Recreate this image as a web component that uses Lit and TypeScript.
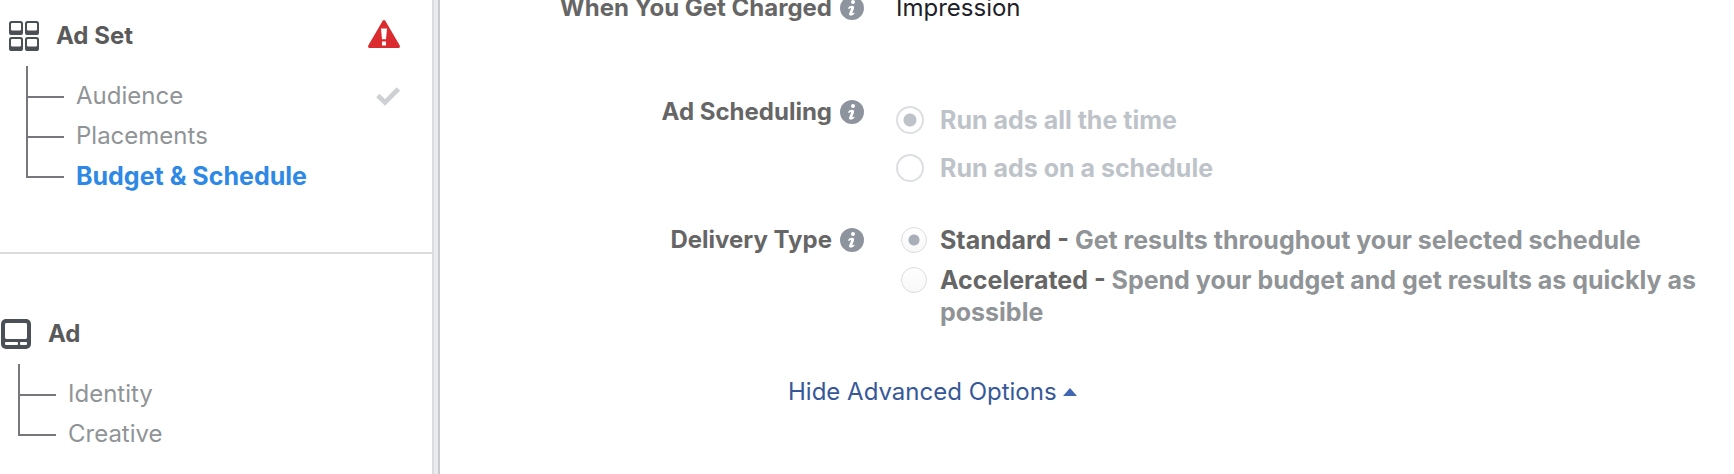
import { LitElement, html, css, svg } from "lit";
import { customElement, property } from "lit/decorators.js";

@customElement("info-badge")
class InfoBadge extends LitElement {
  @property() label = "";

  static styles = css`
    :host {
      display: block;
      flex: none;
      height: 24px;
    }
    .button {
      display: block;
      width: 24px;
      height: 24px;
      margin: 0;
      padding: 0;
      border: 0;
      background: none;
    }
    .glyph {
      display: block;
    }
  `;

  render() {
    return html`<button class="button" type="button" aria-label="About ${this.label}">
      <svg class="glyph" width="24" height="24" viewBox="0 0 24 24" aria-hidden="true">
        <circle cx="12" cy="12" r="12" fill="#8d949e" />
        <circle cx="13" cy="6" r="2" fill="#fff" />
        <path
          d="M8 12.2 C9 10.6 10.2 9.8 12 9.8 C13.8 9.8 14.6 10.9 14 12.4 L12.4 16.4 C12.2 17.2 12.6 17.6 13.2 17.2 L14.2 16.5 L14.7 17.2 C13.6 18.8 12.2 19.6 10.8 19.6 C9.2 19.6 8.7 18.5 9.3 17 L10.9 13 C11.1 12.3 10.7 11.9 10.1 12.2 L8.8 13 Z"
          fill="#fff"
        />
      </svg>
    </button>`;
  }
}

interface Step {
  text: string;
  active?: boolean;
  done?: boolean;
}

const adSetSteps: Step[] = [
  { text: "Audience", done: true },
  { text: "Placements" },
  { text: "Budget & Schedule", active: true },
];

const adSteps: Step[] = [{ text: "Identity" }, { text: "Creative" }];

const tile = (x: number, y: number) => svg`
  <rect x=${x} y=${y} width="14" height="14" rx="2.6" fill="#4b4f56" />
  <rect x=${x + 2} y=${y + 2} width="10" height="7.4" rx="1" fill="#fff" />`;

@customElement("step-nav")
class StepNav extends LitElement {
  static styles = css`
    :host {
      display: block;
      box-sizing: border-box;
      flex: none;
      width: 440px;
      border-right: 2px solid #cacaca;
      background: #e9ebee;
      padding-right: 4px;
    }
    .nav {
      box-sizing: border-box;
      height: 100%;
      border-right: 2px solid #dcdcde;
      background: #fff;
    }
    .section {
      padding: 21px 32px 55px 9px;
    }
    .section + .section {
      border-top: 2px solid #dcdcdc;
      padding: 65px 32px 0 1px;
    }
    .header {
      display: flex;
      align-items: center;
      gap: 17px;
      height: 30px;
    }
    .title {
      flex: 1;
      margin: 0;
      font-size: 24px;
      font-weight: 700;
      line-height: 30px;
      color: #5a5a5a;
    }
    .steps {
      list-style: none;
      margin: 15px 0 0 17px;
      padding: 0;
    }
    .step {
      box-sizing: border-box;
      display: flex;
      align-items: center;
      justify-content: space-between;
      height: 40px;
      padding: 0 0 2px 50px;
      background:
        linear-gradient(#77777d, #77777d) 0 calc(100% - 19px) / 38px 2px no-repeat,
        linear-gradient(#77777d, #77777d) 0 0 / 2px 100% no-repeat;
    }
    .step:first-child {
      height: 51px;
      padding-top: 11px;
    }
    .step:last-child {
      background-size:
        38px 2px,
        2px calc(100% - 19px);
    }
    .link {
      font-size: 24px;
      line-height: 32px;
      color: #909497;
      text-decoration: none;
    }
    .link.active {
      font-size: 25px;
      font-weight: 700;
      color: #2e88e6;
    }
    .icon {
      display: block;
      flex: none;
    }
  `;

  private steps(steps: Step[]) {
    return html`<ul class="steps">
      ${steps.map(
        (s) => html`<li class="step">
          <a class="link ${s.active ? "active" : ""}" href="#">${s.text}</a>
          ${s.done
            ? html`<svg class="icon" width="24" height="20" viewBox="0 0 24 20" role="img" aria-label="Complete">
                <path d="M1.8 9.6 L9 16.4 L22.4 3" fill="none" stroke="#ced0d4" stroke-width="4.8" />
              </svg>`
            : null}
        </li>`
      )}
    </ul>`;
  }

  render() {
    return html`<nav class="nav">
      <section class="section">
        <div class="header">
          <svg class="icon" width="30" height="30" viewBox="0 0 30 30" aria-hidden="true">
            ${tile(0, 0)} ${tile(16, 0)} ${tile(0, 16)} ${tile(16, 16)}
          </svg>
          <h2 class="title">Ad Set</h2>
          <svg class="icon" width="32" height="32" viewBox="0 0 32 32" role="img" aria-label="Needs attention">
            <path
              d="M14.4 1.2 Q16 -1.2 17.6 1.2 L31.6 25.2 Q32.6 28 30.4 28 H1.6 Q-0.6 28 0.4 25.2 Z"
              fill="#da2b30"
            />
            <path d="M13 8.4 H19 L18 19.2 H14 Z M14 21.4 H18 V25.4 H14 Z" fill="#fff" />
          </svg>
        </div>
        ${this.steps(adSetSteps)}
      </section>
      <section class="section">
        <div class="header">
          <svg class="icon" width="30" height="30" viewBox="0 0 30 30" aria-hidden="true">
            <rect width="30" height="30" rx="5" fill="#4b4f56" />
            <rect x="4" y="4" width="22" height="16" rx="1.4" fill="#fff" />
            <rect x="4" y="23" width="13" height="3" rx="1" fill="#fff" />
            <rect x="19" y="23" width="7" height="3" rx="1" fill="#fff" />
          </svg>
          <h2 class="title">Ad</h2>
        </div>
        ${this.steps(adSteps)}
      </section>
    </nav>`;
  }
}

@customElement("app-root")
class AppRoot extends LitElement {
  static styles = css`
    :host {
      display: flex;
      min-height: 100vh;
      overflow: hidden;
      background: #fff;
      font-family: Inter, "Liberation Sans", sans-serif;
      font-size: 24px;
      line-height: 32px;
    }
    .main {
      flex: 1;
      min-width: 0;
      margin-top: -8px;
      padding-right: 24px;
    }
    .row {
      display: grid;
      grid-template-columns: 424px minmax(0, 1fr);
      column-gap: 32px;
      align-items: start;
      margin-bottom: 40px;
    }
    .row.charged {
      margin-bottom: 72px;
    }
    .row.delivery {
      margin-bottom: 48px;
    }
    .name {
      display: flex;
      align-items: center;
      justify-content: flex-end;
      gap: 8px;
      font-weight: 700;
      color: #666;
    }
    .value {
      color: #1d2129;
    }
    .choices {
      display: grid;
      gap: 16px;
      padding-top: 8px;
    }
    .choices.compact {
      gap: 8px;
      padding-top: 0;
    }
    .choice {
      display: grid;
      grid-template-columns: 28px minmax(0, 1fr);
      column-gap: 16px;
      align-items: start;
      font-size: 25px;
      font-weight: 700;
      color: #bec3c9;
    }
    .radio {
      appearance: none;
      box-sizing: border-box;
      width: 28px;
      height: 28px;
      margin: 2px 0 0;
      border: 2px solid #dddfe2;
      border-radius: 50%;
      background: #fff;
    }
    .radio:checked {
      background: radial-gradient(circle, #bec3c9 6px, #fff 7px);
    }
    .compact .choice {
      grid-template-columns: 31px minmax(0, 1fr);
      column-gap: 13px;
      color: #909497;
    }
    .compact .radio {
      justify-self: end;
      width: 26px;
      height: 26px;
      margin-top: 3px;
      border: 1px solid #dcdcdc;
      background: linear-gradient(#fff, #f8f8f8);
    }
    .compact .radio:checked {
      background:
        radial-gradient(circle, #a9afb9 5px, transparent 6px),
        linear-gradient(#fff, #f8f8f8);
    }
    .strong {
      color: #666;
    }
    .toggle {
      display: flex;
      align-items: center;
      gap: 6px;
      margin: 0 0 0 348px;
      padding: 0;
      border: 0;
      background: none;
      font: inherit;
      color: #365899;
    }
    .caret {
      display: block;
    }
  `;

  render() {
    return html`
      <step-nav></step-nav>
      <main class="main">
        <div class="row charged">
          <div class="name">When You Get Charged<info-badge label="When You Get Charged"></info-badge></div>
          <div class="value">Impression</div>
        </div>
        <div class="row" role="radiogroup" aria-labelledby="scheduling">
          <div class="name"><span id="scheduling">Ad Scheduling</span><info-badge label="Ad Scheduling"></info-badge></div>
          <div class="choices">
            <label class="choice">
              <input class="radio" type="radio" name="scheduling" checked disabled />
              <span>Run ads all the time</span>
            </label>
            <label class="choice">
              <input class="radio" type="radio" name="scheduling" disabled />
              <span>Run ads on a schedule</span>
            </label>
          </div>
        </div>
        <div class="row delivery" role="radiogroup" aria-labelledby="delivery">
          <div class="name"><span id="delivery">Delivery Type</span><info-badge label="Delivery Type"></info-badge></div>
          <div class="choices compact">
            <label class="choice">
              <input class="radio" type="radio" name="delivery" checked disabled />
              <span><span class="strong">Standard - </span>Get results throughout your selected schedule</span>
            </label>
            <label class="choice">
              <input class="radio" type="radio" name="delivery" disabled />
              <span><span class="strong">Accelerated - </span>Spend your budget and get results as quickly as possible</span>
            </label>
          </div>
        </div>
        <button class="toggle" type="button" aria-expanded="true">
          Hide Advanced Options
          <svg class="caret" width="14" height="8" viewBox="0 0 14 8" aria-hidden="true">
            <path d="M0 8 L7 0 L14 8 Z" fill="#4267b2" />
          </svg>
        </button>
      </main>
    `;
  }
}
